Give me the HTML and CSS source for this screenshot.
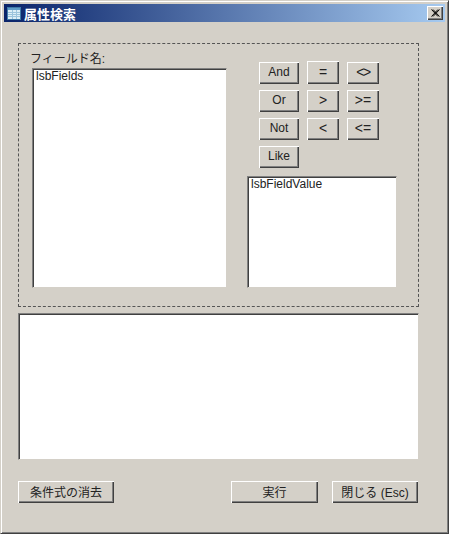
FILE: index.html
```html
<!DOCTYPE html>
<html lang="ja">
<head>
  <meta charset="UTF-8" />
  <meta name="viewport" content="width=device-width, initial-scale=1.0"/>
  <title>属性検索</title>
  <link rel="stylesheet" href="styles.css">
</head>
<body>
  <div class="window">
    <div class="titlebar">
      <svg class="title-icon" width="14" height="13" viewBox="0 0 14 13">
        <rect x="0.5" y="0.5" width="13" height="12" fill="#dceef6" stroke="#3f7aa8"/>
        <rect x="1" y="1" width="12" height="2" fill="#5f9cc8"/>
        <path d="M1 5.5h12M1 7.5h12M1 9.5h12M5.5 3v9M9.5 3v9" stroke="#9cc4dc" fill="none"/>
      </svg>
      <span class="title-text">属性検索</span>
      <button class="close-btn" aria-label="閉じる">
        <svg width="9" height="8" viewBox="0 0 9 8">
          <path d="M0.5 0.5L7 7.5M2 0.5L8.5 7.5M7 0.5L0.5 7.5M8.5 0.5L2 7.5" stroke="#000" fill="none"/>
        </svg>
      </button>
    </div>

    <div class="content">
      <div class="panel">
        <div class="field-col">
          <div class="field-label">フィールド名:</div>
          <div class="listbox field-list">lsbFields</div>
        </div>
        <div class="side-col">
          <div class="op-grid">
            <button class="btn">And</button>
            <button class="btn btn-op btn-raised">=</button>
            <button class="btn btn-op btn-diamond">&lt;&gt;</button>
            <button class="btn">Or</button>
            <button class="btn btn-op">&gt;</button>
            <button class="btn btn-op">&gt;=</button>
            <button class="btn">Not</button>
            <button class="btn btn-op">&lt;</button>
            <button class="btn btn-op">&lt;=</button>
            <button class="btn">Like</button>
          </div>
          <div class="listbox value-list">lsbFieldValue</div>
        </div>
      </div>

      <div class="listbox expression"></div>

      <div class="actions">
        <button class="btn btn-clear">条件式の消去</button>
        <button class="btn btn-run">実行</button>
        <button class="btn btn-close">閉じる (Esc)</button>
      </div>
    </div>
  </div>
</body>
</html>
```

FILE: styles.css
```css
* {
  box-sizing: border-box;
}

body {
  margin: 0;
  background-color: #ffffff;
  font-family: "Liberation Sans", "Noto Sans CJK JP", sans-serif;
  font-size: 12px;
  color: #222222;
}

.window {
  width: 449px;
  height: 534px;
  padding: 3px;
  background-color: #d4d0c8;
  border-top: 1px solid #d4d0c8;
  border-left: 1px solid #d4d0c8;
  border-right: 1px solid #404040;
  border-bottom: 1px solid #404040;
  box-shadow: inset 1px 1px 0 #ffffff, inset -1px -1px 0 #808080;
}

.titlebar {
  display: flex;
  align-items: center;
  height: 18px;
  padding: 0 2px 0 3px;
  background: linear-gradient(to right, #0a246a, #a6caf0);
}

.title-icon {
  flex: none;
}

.title-text {
  margin-left: 3px;
  color: #ffffff;
  font-weight: bold;
  font-size: 13px;
}

.close-btn {
  display: flex;
  align-items: center;
  justify-content: center;
  width: 16px;
  height: 14px;
  margin-left: auto;
  padding: 0;
  background-color: #d4d0c8;
  border: none;
  box-shadow: inset 1px 1px 0 #ffffff, inset -1px -1px 0 #404040, inset -2px -2px 0 #808080;
}

.content {
  padding: 21px 26px 0 14px;
}

.panel {
  display: flex;
  gap: 20px;
  width: 401px;
  height: 264px;
  padding: 8px 0 18px 13px;
  border: 1px dashed #555555;
}

.field-label {
  height: 16px;
  margin-left: -2px;
  line-height: 14px;
}

.listbox {
  padding: 1px 0 0 3px;
  background-color: #ffffff;
  line-height: 13px;
  border-top: 1px solid #808080;
  border-left: 1px solid #808080;
  border-right: 1px solid #d4d0c8;
  border-bottom: 1px solid #d4d0c8;
  box-shadow: inset 1px 1px 0 #404040;
}

.field-list {
  width: 195px;
  height: 220px;
}

.side-col {
  display: flex;
  flex-direction: column;
  padding-top: 10px;
}

.op-grid {
  display: grid;
  grid-template-columns: 40px 32px 32px;
  grid-auto-rows: 22px;
  column-gap: 8px;
  row-gap: 6px;
  margin-left: 12px;
}

.btn {
  padding: 0 0 2px;
  background-color: #d4d0c8;
  font-family: inherit;
  font-size: 12px;
  color: #222222;
  border: none;
  box-shadow: inset 1px 1px 0 #ffffff, inset -1px -1px 0 #404040, inset -2px -2px 0 #808080;
}

.btn-op {
  font-size: 14px;
}

.btn-raised {
  height: 23px;
  margin-top: -1px;
}

.btn-diamond {
  letter-spacing: -1.5px;
}

.value-list {
  width: 150px;
  height: 112px;
  margin-top: 8px;
}

.expression {
  width: 401px;
  height: 147px;
  margin-top: 6px;
}

.actions {
  display: flex;
  height: 22px;
  margin-top: 21px;
}

.btn-clear {
  width: 96px;
}

.btn-run {
  width: 87px;
  margin-left: auto;
  margin-right: 14px;
}

.btn-close {
  width: 86px;
  margin-right: 1px;
}
```
